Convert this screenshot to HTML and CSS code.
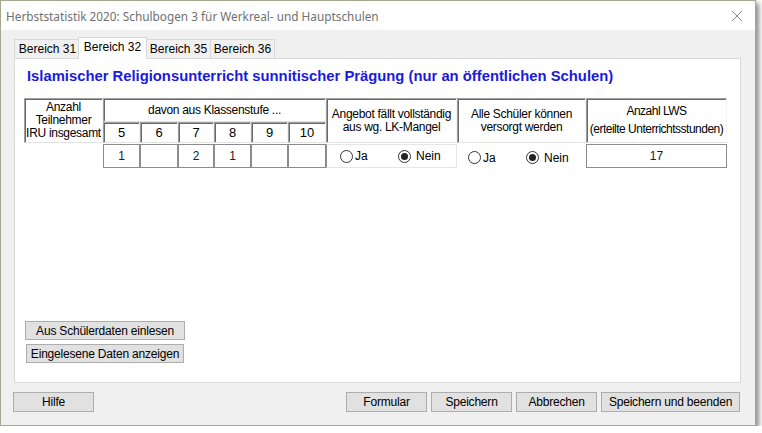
FILE: index.html
```html
<!DOCTYPE html>
<html lang="de">
<head>
  <meta charset="UTF-8">
  <title>Herbststatistik 2020</title>
  <link rel="stylesheet" href="styles.css">
</head>
<body>
  <div class="window">
    <div class="titlebar">
      <span class="title">Herbststatistik 2020: Schulbogen 3 für Werkreal- und Hauptschulen</span>
      <svg class="close" width="12" height="12" viewBox="0 0 12 12">
        <path d="M1 1 L11 11 M11 1 L1 11" stroke="#8a8a8a" stroke-width="1" fill="none"/>
      </svg>
    </div>

    <div class="client">
      <!-- Reiter -->
      <div class="tabs">
        <div class="tab first">Bereich 31</div>
        <div class="tab active">Bereich 32</div>
        <div class="tab">Bereich 35</div>
        <div class="tab">Bereich 36</div>
      </div>

      <div class="panel">
        <h1 class="heading">Islamischer Religionsunterricht sunnitischer Prägung (nur an öffentlichen Schulen)</h1>

        <div class="grid">
          <div class="hd anzahl">Anzahl<br>Teilnehmer<br>IRU insgesamt</div>
          <div class="hd klassen">davon aus Klassenstufe ...</div>
          <div class="hd angebot">Angebot fällt vollständig<br>aus wg. LK-Mangel</div>
          <div class="hd versorgt">Alle Schüler können<br>versorgt werden</div>
          <div class="hd lws">Anzahl LWS<br>(erteilte Unterrichtsstunden)</div>

          <div class="hd num">5</div>
          <div class="hd num">6</div>
          <div class="hd num">7</div>
          <div class="hd num">8</div>
          <div class="hd num">9</div>
          <div class="hd num">10</div>

          <div class="val c2">1</div>
          <div class="val c3"></div>
          <div class="val c4">2</div>
          <div class="val c5">1</div>
          <div class="val c6"></div>
          <div class="val c7"></div>

          <div class="radios r-angebot">
            <label class="opt"><span class="dot"></span>Ja</label>
            <label class="opt"><span class="dot on"></span>Nein</label>
          </div>
          <div class="radios r-versorgt">
            <label class="opt"><span class="dot"></span>Ja</label>
            <label class="opt"><span class="dot on"></span>Nein</label>
          </div>
          <div class="val lws-val">17</div>
        </div>

        <div class="tools">
          <button class="btn wide">Aus Schülerdaten einlesen</button>
          <button class="btn wide second">Eingelesene Daten anzeigen</button>
        </div>
      </div>

      <div class="footer">
        <button class="btn foot">Hilfe</button>
        <div class="spacer"></div>
        <button class="btn foot">Formular</button>
        <button class="btn foot">Speichern</button>
        <button class="btn foot">Abbrechen</button>
        <button class="btn foot last">Speichern und beenden</button>
      </div>
    </div>
  </div>
</body>
</html>
```

FILE: styles.css
```css
/* Grundlagen */
* {
  margin: 0;
  padding: 0;
  box-sizing: border-box;
}

body {
  background: #fff;
  font-family: "Liberation Sans", Arial, sans-serif;
  font-size: 12px;
  color: #000;
}

/* Fenster */
.window {
  width: 756px;
  height: 426px;
  border: 1px solid #a3a98e;
  background: #f0f0f0;
  box-shadow: 3px 3px 5px rgba(0, 0, 0, 0.45);
  display: flex;
  flex-direction: column;
}

.titlebar {
  height: 29px;
  background: #fff;
  display: flex;
  align-items: center;
  padding: 0 12px 0 5px;
}

.title {
  font-family: "Noto Sans", "Open Sans", sans-serif;
  font-size: 11.8px;
  color: #707070;
  flex: 1;
}

.close {
  display: block;
}

.client {
  flex: 1;
  display: flex;
  flex-direction: column;
  padding: 7px 14px 0 13px;
}

/* Reiter */
.tabs {
  display: flex;
  height: 21px;
  align-items: flex-end;
  position: relative;
  z-index: 1;
}

.tab {
  width: 65px;
  height: 19px;
  border: 1px solid #d9d9d9;
  border-bottom: none;
  background: #f0f0f0;
  line-height: 18px;
  text-align: center;
  white-space: nowrap;
  margin-right: -1px;
}

.tab.first {
  width: 67px;
}

.tab.active {
  width: 69px;
  height: 22px;
  background: #fff;
  margin: 0 -1px -1px -2px;
  line-height: 18px;
}

.panel {
  height: 325px;
  width: 727px;
  background: #fff;
  border: 1px solid #d9d9d9;
  display: flex;
  flex-direction: column;
  padding: 9px 0 19px 9px;
}

.heading {
  font-size: 14.8px;
  font-weight: bold;
  color: #1a1ae0;
  margin-left: 3px;
  line-height: 17px;
  white-space: nowrap;
}

/* Tabelle */
.grid {
  display: grid;
  grid-template-columns: 79px 37px 38px 36px 37px 37px 38px 131px 129px 141px;
  grid-template-rows: 24px 21px 25px;
  margin-top: 13px;
}

.hd {
  display: flex;
  align-items: center;
  justify-content: center;
  text-align: center;
  white-space: nowrap;
  border: 1px solid;
  border-color: #a0a0a0 #f4f4f4 #e3e3e3 #a0a0a0;
  box-shadow: inset 1px 1px 0 #696969;
  line-height: 13px;
  font-size: 12px;
  letter-spacing: -0.3px;
}

.anzahl {
  grid-column: 1;
  grid-row: 1 / 3;
}

.klassen {
  grid-column: 2 / 8;
  grid-row: 1;
}

.angebot {
  grid-column: 8;
  grid-row: 1 / 3;
}

.versorgt {
  grid-column: 9;
  grid-row: 1 / 3;
}

.lws {
  grid-column: 10;
  grid-row: 1 / 3;
  align-items: flex-start;
  padding-top: 3px;
  line-height: 18px;
  letter-spacing: -0.5px;
}

.num {
  grid-row: 2;
  font-size: 13px;
  letter-spacing: 0;
}

.val {
  grid-row: 3;
  border: 1px solid #8c8c8c;
  margin-top: 1px;
  display: flex;
  align-items: center;
  justify-content: center;
  font-size: 12px;
  color: #202020;
}

.c2 { grid-column: 2; }
.c3 { grid-column: 3; }
.c4 { grid-column: 4; }
.c5 { grid-column: 5; }
.c6 { grid-column: 6; }
.c7 { grid-column: 7; }

.lws-val {
  grid-column: 10;
}

.radios {
  grid-row: 3;
  display: flex;
  align-items: center;
  margin-top: 1px;
  border: 1px solid #e6e6e6;
}

.r-angebot {
  grid-column: 8;
  padding-left: 13px;
  border-left-color: #8c8c8c;
}

.r-versorgt {
  grid-column: 9;
  padding: 3px 0 0 10px;
  border-color: transparent;
}

.opt {
  display: inline-flex;
  align-items: center;
  width: 58px;
  font-size: 12px;
}

.dot {
  width: 13px;
  height: 13px;
  border: 1px solid #333;
  border-radius: 50%;
  margin-right: 2px;
  display: flex;
  align-items: center;
  justify-content: center;
}

.dot.on::after {
  content: "";
  width: 7px;
  height: 7px;
  border-radius: 50%;
  background: #222;
}

.opt:nth-child(2) .dot {
  margin-right: 5px;
}

/* Knöpfe */
.btn {
  font-family: "Liberation Sans", Arial, sans-serif;
  font-size: 12px;
  background: #e1e1e1;
  border: 1px solid #adadad;
  color: #000;
  height: 19px;
  letter-spacing: -0.2px;
}

.tools {
  margin-top: auto;
  display: flex;
  flex-direction: column;
  align-items: flex-start;
  gap: 4px;
  padding-left: 1px;
}

.wide {
  width: 160px;
}

.wide.second {
  width: 158px;
  margin-left: 1px;
}

.footer {
  display: flex;
  margin-top: 9px;
  gap: 4px;
  padding-right: 1px;
}

.foot {
  width: 81px;
  height: 20px;
}

.footer .foot:first-child {
  margin-left: -1px;
}

.foot.last {
  width: 139px;
}

.spacer {
  flex: 1;
}
```
